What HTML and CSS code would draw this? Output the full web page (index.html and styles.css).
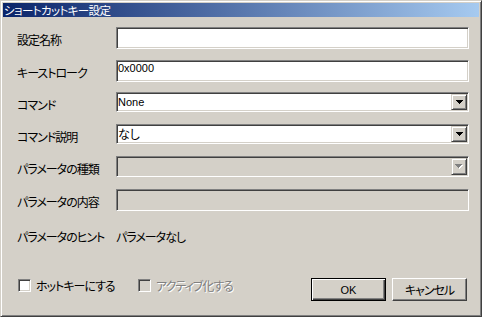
FILE: index.html
```html
<!DOCTYPE html>
<html lang="ja">
<head>
<meta charset="utf-8">
<link rel="stylesheet" href="styles.css">
</head>
<body>
<div class="window">
  <div class="titlebar"><span class="title">ショートカットキー設定</span></div>
  <div class="content">
    <div class="form">
      <div class="label">設定名称</div>
      <div class="field edit"></div>

      <div class="label">キーストローク</div>
      <div class="field edit"><span class="latin">0x0000</span></div>

      <div class="label">コマンド</div>
      <div class="field combo">
        <span class="value latin">None</span>
        <span class="drop"><svg width="7" height="4" viewBox="0 0 7 4"><path d="M0 0h7v1H0zM1 1h5v1H1zM2 2h3v1H2zM3 3h1v1H3z" fill="#000"/></svg></span>
      </div>

      <div class="label">コマンド説明</div>
      <div class="field combo">
        <span class="value">なし</span>
        <span class="drop"><svg width="7" height="4" viewBox="0 0 7 4"><path d="M0 0h7v1H0zM1 1h5v1H1zM2 2h3v1H2zM3 3h1v1H3z" fill="#000"/></svg></span>
      </div>

      <div class="label">パラメータの種類</div>
      <div class="field combo disabled tall">
        <span class="value"></span>
        <span class="drop"><svg width="8" height="5" viewBox="0 0 8 5"><path d="M1 1h7v1H1zM2 2h5v1H2zM3 3h3v1H3zM4 4h1v1H4z" fill="#fff"/><path d="M0 0h7v1H0zM1 1h5v1H1zM2 2h3v1H2zM3 3h1v1H3z" fill="#808080"/></svg></span>
      </div>

      <div class="label">パラメータの内容</div>
      <div class="field edit disabled"></div>

      <div class="label hint">パラメータのヒント</div>
      <div class="hint-value">パラメータなし</div>
    </div>

    <div class="footer">
      <label class="check first"><span class="box"></span><span class="check-text">ホットキーにする</span></label>
      <label class="check off"><span class="box"></span><span class="check-text">アクティブ化する</span></label>
      <div class="buttons">
        <div class="btn default"><span class="latin">OK</span></div>
        <div class="btn"><span class="jp">キャンセル</span></div>
      </div>
    </div>
  </div>
</div>
</body>
</html>
```
FILE: styles.css
```css
* { box-sizing: border-box; }

html, body {
  margin: 0;
  padding: 0;
  background: #d4d0c8;
}

body {
  font-family: "Noto Sans CJK JP", "Liberation Sans", sans-serif;
  font-size: 12px;
  color: #000;
  font-feature-settings: "palt";
}

.window {
  width: 482px;
  height: 317px;
  display: flex;
  flex-direction: column;
  background: #d4d0c8;
  border: 1px solid;
  border-color: #d4d0c8 #404040 #404040 #d4d0c8;
  box-shadow: inset 1px 1px #fff, inset -1px -1px #808080;
  padding: 2px;
}

.titlebar {
  height: 14px;
  background: linear-gradient(to right, #0a246a, #a6caf0);
  color: #fff;
  padding-left: 1px;
  line-height: 14px;
  font-size: 11.5px;
  letter-spacing: -0.6px;
  white-space: nowrap;
}

.content {
  flex: 1;
  display: flex;
  flex-direction: column;
  padding: 10px 0 13px 0;
}

.form {
  display: grid;
  grid-template-columns: 99px 353px;
  grid-template-rows: 33px 32px 32px 32px 33px 33px 20px;
  padding-left: 14px;
}

.label,
.hint-value,
.check-text,
.jp {
  letter-spacing: -1px;
}

.label {
  padding-top: 6px;
  line-height: 14px;
  white-space: nowrap;
}

.label.hint { padding-top: 8px; }

.hint-value {
  padding-top: 8px;
  line-height: 14px;
}

.latin {
  font-family: "Liberation Sans", "Noto Sans CJK JP", sans-serif;
  font-size: 11px;
  letter-spacing: 0;
}

.field {
  align-self: start;
  background: #fff;
  border: 1px solid;
  border-color: #808080 #fff #fff #808080;
  box-shadow: inset 1px 1px #404040, inset -1px -1px #d4d0c8;
  padding: 1px;
}

.edit {
  height: 22px;
  line-height: 14px;
}

.edit .latin { line-height: 13px; display: block; }

.combo {
  height: 20px;
  display: flex;
}

.combo.tall { height: 21px; }

.combo .value {
  flex: 1;
  line-height: 16px;
  white-space: nowrap;
}

.drop {
  width: 16px;
  height: 100%;
  display: flex;
  align-items: center;
  justify-content: center;
  background: #d4d0c8;
  border: 1px solid;
  border-color: #d4d0c8 #404040 #404040 #d4d0c8;
  box-shadow: inset 1px 1px #fff, inset -1px -1px #808080;
}

.drop svg { display: block; }

.field.disabled { background: #d4d0c8; }

.footer {
  margin-top: auto;
  display: flex;
  align-items: flex-start;
  padding: 0 12px 0 15px;
}

.check {
  display: flex;
  align-items: center;
  gap: 5px;
  margin-top: 1px;
  line-height: 13px;
  white-space: nowrap;
}

.check.first { width: 120px; }

.box {
  width: 13px;
  height: 13px;
  background: #fff;
  border: 1px solid;
  border-color: #808080 #fff #fff #808080;
  box-shadow: inset 1px 1px #404040, inset -1px -1px #d4d0c8;
}

.check.off .box { background: #d4d0c8; }

.check.off .check-text {
  color: #808080;
  text-shadow: 1px 1px 0 #fff;
}

.buttons {
  margin-left: auto;
  display: flex;
  gap: 6px;
}

.btn {
  width: 75px;
  height: 23px;
  display: flex;
  align-items: center;
  justify-content: center;
  background: #d4d0c8;
  border: 1px solid;
  border-color: #fff #404040 #404040 #fff;
  box-shadow: inset -1px -1px #808080;
  line-height: 14px;
}

.btn.default {
  border-color: #000;
  box-shadow: inset 1px 1px #fff, inset -1px -1px #404040, inset -2px -2px #808080;
}
```
